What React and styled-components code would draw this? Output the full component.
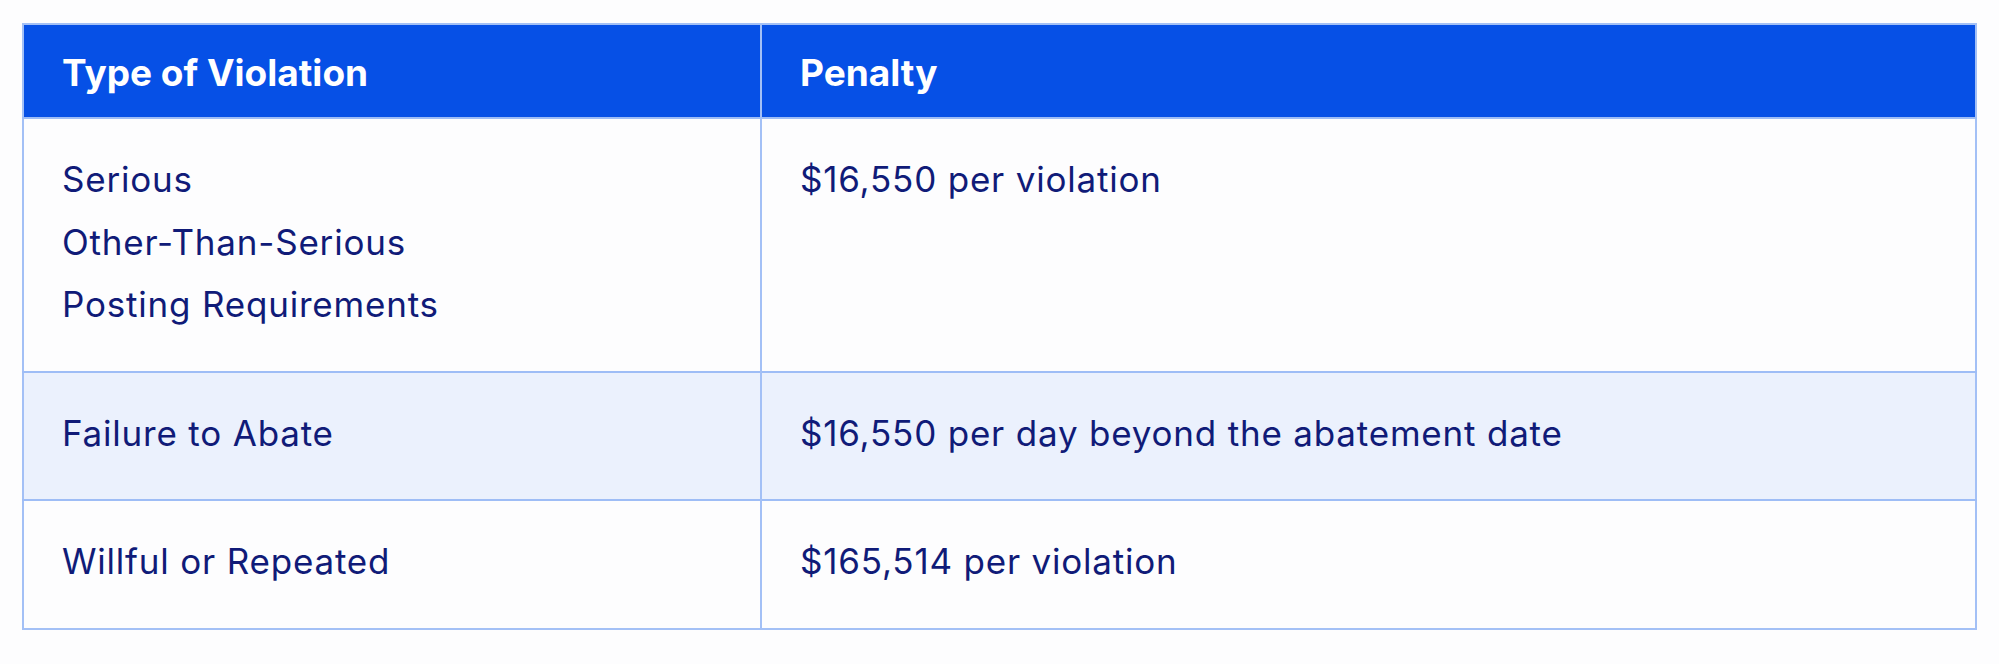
import React from 'react'
import styled, { createGlobalStyle } from 'styled-components'

const GlobalStyle = createGlobalStyle`
  html, body {
    margin: 0;
    padding: 0;
    background: #fdfdfe;
  }
`

const Page = styled.div`
  padding: 23px 22px 35px 22px;
  font-family: Inter, Lato, sans-serif;
`

const Table = styled.table`
  width: 100%;
  border-collapse: collapse;
  border: 2px solid #a3c0f6;
`

const HeadCell = styled.th`
  background: #0650e6;
  color: #ffffff;
  font-weight: 700;
  font-size: 37px;
  text-align: left;
  height: 94px;
  padding: 2px 38px 0 38px;
  box-sizing: border-box;
  border-left: 2px solid #a3c0f6;
  width: ${p => p.$w || 'auto'};
  &:first-child {
    border-left: none;
  }
`

const Row = styled.tr`
  background: ${p => (p.$shade ? '#ebf1fd' : '#fdfdfe')};
  border-top: 2px solid #9ebdf6;
`

const Cell = styled.td`
  color: #101b78;
  font-size: 35px;
  letter-spacing: 0.8px;
  line-height: 62.5px;
  padding: 29px 38px 35px 38px;
  vertical-align: top;
  border-left: 2px solid #a3c0f6;
  &:first-child {
    border-left: none;
  }
`

const Line = styled.div`
  white-space: nowrap;
`

const rows = [
  {
    type: ['Serious', 'Other-Than-Serious', 'Posting Requirements'],
    penalty: '$16,550 per violation',
  },
  { type: ['Failure to Abate'], penalty: '$16,550 per day beyond the abatement date', shade: true },
  { type: ['Willful or Repeated'], penalty: '$165,514 per violation' },
]

export default function App() {
  return (
    <>
      <GlobalStyle />
      <Page>
        <Table>
          <thead>
            <tr>
              <HeadCell $w="738px">Type of Violation</HeadCell>
              <HeadCell>Penalty</HeadCell>
            </tr>
          </thead>
          <tbody>
            {rows.map((r, i) => (
              <Row key={i} $shade={r.shade}>
                <Cell>
                  {r.type.map(t => (
                    <Line key={t}>{t}</Line>
                  ))}
                </Cell>
                <Cell>{r.penalty}</Cell>
              </Row>
            ))}
          </tbody>
        </Table>
      </Page>
    </>
  )
}
